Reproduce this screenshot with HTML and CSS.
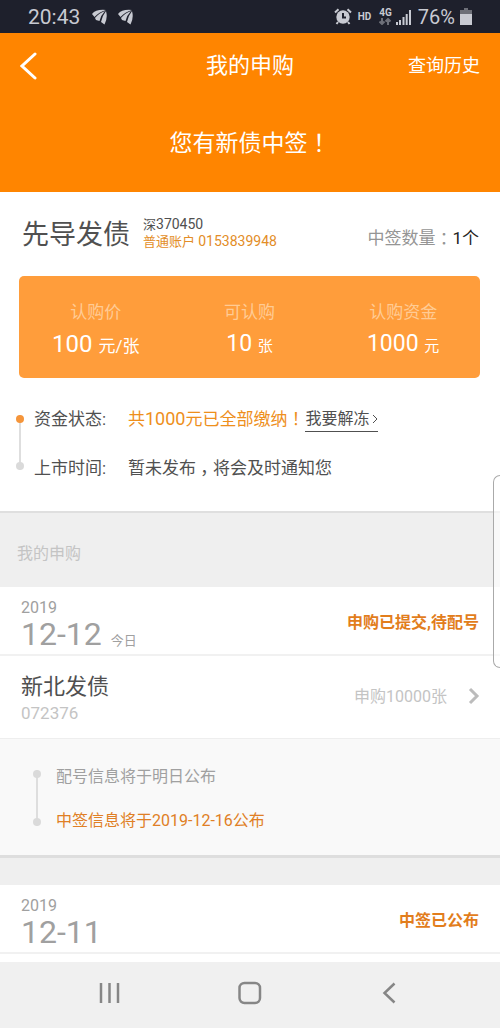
FILE: index.html
```html
<!DOCTYPE html>
<html lang="zh-CN">
<head>
<meta charset="utf-8">
<meta name="viewport" content="width=device-width, initial-scale=1">
<title>我的申购</title>
<link rel="stylesheet" href="styles.css">
</head>
<body>
<div class="status">
  <span class="clock">20:43</span>
  <svg class="leaf" viewBox="0 0 15 16"><path d="M0 5Q4 0 14 1Q7 3 2.500 8ZM3 9Q7 4 13 2Q9 6 7.500 12L4 11ZM9 13Q10 7 14 2Q16 9 12.500 15.500Z"/></svg>
  <svg class="leaf" viewBox="0 0 15 16"><path d="M0 5Q4 0 14 1Q7 3 2.500 8ZM3 9Q7 4 13 2Q9 6 7.500 12L4 11ZM9 13Q10 7 14 2Q16 9 12.500 15.500Z"/></svg>
  <span class="spacer"></span>
  <svg class="alarm" viewBox="0 0 18 17"><circle cx="9" cy="9" r="6.700"/><path class="hands" d="M9 5V9.500H12"/><path class="arm" d="M1 4.500L4.500 1.200M17 4.500L13.500 1.200M4 14L2.500 16M14 14L15.500 16"/></svg>
  <span class="hd">HD</span>
  <span class="net">4G
    <svg class="updown" viewBox="0 0 12 7"><path d="M3 0V6M0.500 3.500L3 6L5.500 3.500M9 7V1M6.500 3.500L9 1L11.500 3.500"/></svg>
  </span>
  <svg class="signal" viewBox="0 0 15 15"><path d="M0 12h2v3h-2zM3 10h2v5h-2zM6.500 7h2v8h-2zM9.700 4h2v11h-2zM13 0h2v15h-2z"/></svg>
  <span class="percent">76%</span>
  <svg class="battery" viewBox="0 0 12 17"><path class="cap" d="M4 0h4v2h4v4H0V2h4z"/><path d="M0 6h12v11H0z"/></svg>
</div>

<header class="top">
  <div class="bar">
    <button class="back" aria-label="返回"><svg viewBox="0 0 17 28"><path d="M15 2L2 14L15 26"/></svg></button>
    <h1>我的申购</h1>
    <a class="history" href="#history">查询历史</a>
  </div>
  <p class="notice">您有新债中签<span class="mark">！</span></p>
</header>

<main>
  <section class="win">
    <div class="bond">
      <h2>先导发债</h2>
      <div class="codes">
        <div>深<span class="digits">370450</span></div>
        <div class="account">普通账户 <span class="digits">0153839948</span></div>
      </div>
      <div class="count">中签数量<span class="mark">：</span><b>1个</b></div>
    </div>
    <dl class="card">
      <div><dt>认购价</dt><dd class="price">100 <small>元/张</small></dd></div>
      <div><dt>可认购</dt><dd>10 <small>张</small></dd></div>
      <div><dt>认购资金</dt><dd>1000 <small>元</small></dd></div>
    </dl>
    <div class="progress">
      <div class="rail rail-live"><i></i><i></i></div>
      <dl class="facts">
        <div><dt>资金状态:</dt><dd><span class="paid">共<span class="sum">1000</span>元已全部缴纳<span class="mark">！</span></span><a class="unfreeze" href="#unfreeze">我要解冻<svg viewBox="0 0 6 10"><path d="M1 1L5 5L1 9"/></svg></a></dd></div>
        <div><dt>上市时间:</dt><dd>暂未发布<span class="mark">，</span>将会及时通知您</dd></div>
      </dl>
    </div>
  </section>

  <h3 class="group">我的申购</h3>

  <section class="day">
    <div class="date">
      <div><div class="year">2019</div><div class="md">12-12<span class="today">今日</span></div></div>
      <strong>申购已提交,待配号</strong>
    </div>
    <a class="item" href="#072376">
      <span><span class="name">新北发债</span><span class="code">072376</span></span>
      <span class="amount">申购10000张</span>
      <svg viewBox="0 0 12 18"><path d="M2 2L9 9L2 16"/></svg>
    </a>
    <div class="steps">
      <div class="rail"><i></i><i></i></div>
      <div class="step-list"><div>配号信息将于明日公布</div><div class="hot">中签信息将于2019-12-16公布</div></div>
    </div>
  </section>

  <section class="day day-next">
    <div class="date">
      <div><div class="year">2019</div><div class="md">12-11</div></div>
      <strong>中签已公布</strong>
    </div>
  </section>
</main>

<nav class="system">
  <button aria-label="最近"><svg viewBox="0 0 24 24"><path d="M3 2V22M11.500 2V22M20 2V22"/></svg></button>
  <button aria-label="主页"><svg viewBox="0 0 24 24"><rect x="1.500" y="2" width="20.500" height="20" rx="5"/></svg></button>
  <button aria-label="返回"><svg viewBox="0 0 24 24"><path d="M16.500 2.500L6.500 12L16.500 21.500"/></svg></button>
</nav>
<div class="edge-panel"></div>
</body>
</html>
```
FILE: styles.css
```css
* { box-sizing: border-box; margin: 0; padding: 0; }
body {
  position: relative;
  background: #fff;
  color: #505050;
  font-family: Roboto, "Noto Sans CJK SC", sans-serif;
  font-size: 17px;
  line-height: 24px;
}
a { color: inherit; text-decoration: none; }
button { border: 0; background: none; }
svg { display: block; fill: none; }

/* Full-width punctuation, centred in its em box */
.mark {
  display: inline-block;
  width: 1em;
  font-feature-settings: "halt";
  text-align: center;
}

/* Status bar */
.status {
  display: flex;
  align-items: center;
  height: 33px;
  padding: 0 28px;
  background: #1e202c;
  color: #c8cad2;
}
.status svg { fill: #c8cad2; }
.clock { margin-right: 12px; font-size: 21px; }
.leaf { width: 15px; height: 16px; margin-right: 11px; }
.spacer { flex: 1; }
.alarm { width: 18px; height: 17px; }
.alarm path { fill: none; stroke: #c8cad2; stroke-width: 2; }
.alarm .hands { stroke: #1e202c; }
.hd { margin: 0 8px 0 6px; font-size: 10px; font-weight: 700; }
.net { font-size: 10px; font-weight: 700; line-height: 10px; }
.status .updown { width: 12px; height: 7px; fill: none; stroke: #6d6f78; stroke-width: 2; }
.signal { width: 15px; height: 15px; margin: 2px 7px 0 4px; }
.percent { font-size: 20px; }
.battery { width: 12px; height: 17px; margin-left: 5px; }
.battery .cap { fill: #6d6f78; }

/* Header */
.top { padding-bottom: 32px; background: #ff8500; color: #fff; }
.bar {
  display: grid;
  grid-template-columns: 1fr auto 1fr;
  align-items: center;
  height: 66px;
  padding: 0 20px;
}
.back { justify-self: start; }
.back svg { width: 17px; height: 28px; stroke: #fff; stroke-width: 3; stroke-linecap: round; }
h1 { font-size: 22px; font-weight: 400; }
.history { justify-self: end; font-size: 18px; }
.notice { margin-top: 29px; font-size: 23px; line-height: 32px; text-align: center; }

/* Winning lot */
.win { padding: 24px 20px 31px 19px; }
.bond { display: flex; align-items: center; padding: 0 1px 0 3px; }
h2 { font-size: 27px; font-weight: 400; line-height: 38px; }
.codes { margin: 0 0 4px 13px; font-size: 13px; line-height: 16px; }
.digits { font-size: 14px; }
.account { color: #e38d27; }
.count { margin-left: auto; padding-top: 6px; color: #959595; }
.count b { color: #222; font-weight: 400; }
.card {
  display: grid;
  grid-template-columns: repeat(3, 1fr);
  margin-top: 22px;
  padding: 24px 0 14px;
  border-radius: 5px;
  background: #ff9d3b;
  text-align: center;
}
.card dt { margin-bottom: 2px; color: #ffcb94; }
.card dd { color: #fff; font-size: 23px; line-height: 36px; }
.card .price { font-size: 24px; }
.card small { font-size: 15px; }
.card .price small { font-size: 17px; }
.progress { display: grid; grid-template-columns: 15px 1fr; margin-top: 29px; }
.facts { display: grid; gap: 24px; }
.facts div { display: flex; }
.facts dt { width: 94px; }
.facts dd { display: flex; }
.paid { color: #ee8f1c; }
.sum { font-size: 18px; }
.unfreeze {
  display: flex;
  align-items: center;
  gap: 3px;
  margin-left: 1px;
  border-bottom: 1px solid #505050;
  font-size: 16px;
}
.unfreeze svg { width: 6px; height: 10px; stroke: #505050; stroke-width: 1; }

/* Two dots joined by a line */
.rail {
  display: flex;
  flex-direction: column;
  justify-content: space-between;
  width: 8px;
  background: linear-gradient(#dedede, #dedede) center / 2px 100% no-repeat;
}
.rail i { width: 8px; height: 8px; border-radius: 50%; background: #dadada; }
.rail-live { margin: 8px 0 10px -3px; }
.rail-live i:first-child { background: #f5953a; }

/* Subscriptions */
.group {
  padding: 29px 17px 21px;
  border-top: 2px solid #dfdfdf;
  background: #efefef;
  color: #c4c4c4;
  font-size: 16px;
  font-weight: 400;
}
.day { border-bottom: 3px solid #dedede; }
.date {
  display: flex;
  align-items: center;
  justify-content: space-between;
  padding: 11px 21px 4px;
  border-bottom: 2px solid #f1f1f1;
  color: #a0a0a0;
}
.year { font-size: 16px; line-height: 20px; }
.md { font-size: 32px; line-height: 32px; }
.today { margin-left: 9px; font-size: 13px; line-height: 16px; }
.date strong { color: #e27d1c; font-size: 16px; line-height: 28px; padding-bottom: 3px; }
.item { display: flex; align-items: center; padding: 15px 20px 15px 21px; }
.name, .code { display: block; }
.name { font-size: 22px; line-height: 32px; }
.code { color: #c4c4c4; font-size: 17px; line-height: 20px; }
.amount { margin-left: auto; color: #c4c4c4; font-size: 16px; }
.item svg { width: 12px; height: 18px; margin: 0 0 2px 21px; stroke: #bcbcbc; stroke-width: 3; }
.steps {
  display: grid;
  grid-template-columns: 23px 1fr;
  padding: 26px 33px 22px;
  border-top: 1px solid #eee;
  background: #f9f9f9;
}
.steps .rail { margin: 5px 0 7px; }
.step-list { display: grid; gap: 20px; color: #a0a0a0; font-size: 16px; }
.hot { color: #e07f25; }
.day-next { padding-bottom: 8px; border: 0; border-top: 27px solid #efefef; }

/* System navigation */
.system {
  display: grid;
  grid-template-columns: repeat(3, 140px);
  justify-content: center;
  padding: 19px 0 24px;
  background: #f0f0f0;
}
.system button { justify-self: center; }
.system svg { width: 24px; height: 24px; stroke: #868686; stroke-width: 2.500; }

.edge-panel {
  position: absolute;
  top: 475px;
  right: 0;
  width: 7px;
  height: 193px;
  border: 1px solid #aaa;
  border-right: 0;
  border-radius: 7px 0 0 7px;
  background: rgba(255, 255, 255, 0.6);
}
```
